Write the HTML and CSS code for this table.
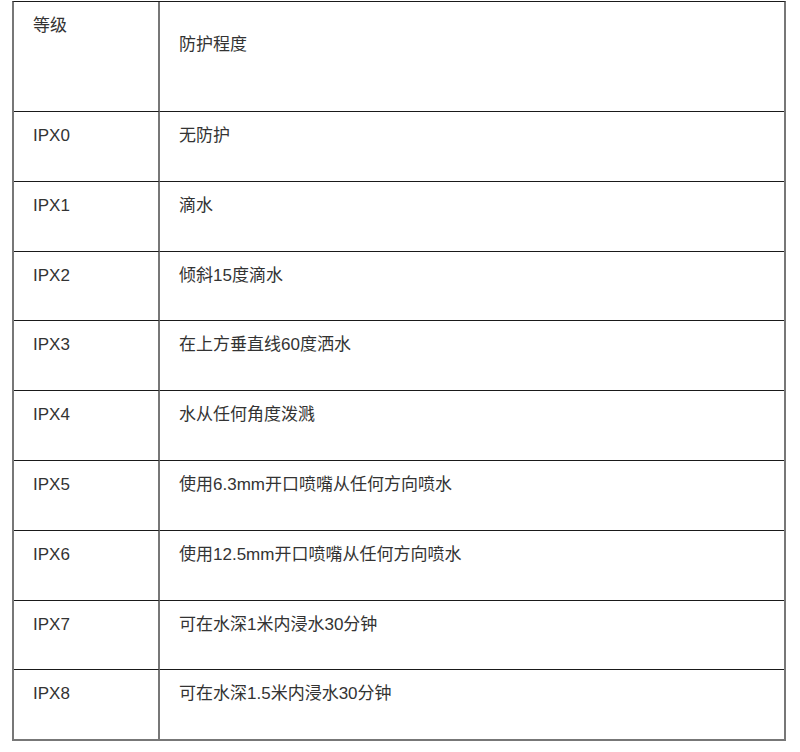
FILE: index.html
```html
<!DOCTYPE html>
<html lang="zh">
<head>
<meta charset="utf-8">
<title>IPX 防水等级</title>
<link rel="stylesheet" href="styles.css">
</head>
<body>
<table class="grade-table">
  <tbody>
    <tr class="head-row">
      <td class="col-grade">等级</td>
      <td class="col-desc"><p class="head-desc">防护程度</p></td>
    </tr>
    <tr><td class="col-grade">IPX0</td><td class="col-desc">无防护</td></tr>
    <tr><td class="col-grade">IPX1</td><td class="col-desc">滴水</td></tr>
    <tr><td class="col-grade">IPX2</td><td class="col-desc">倾斜15度滴水</td></tr>
    <tr><td class="col-grade">IPX3</td><td class="col-desc">在上方垂直线60度洒水</td></tr>
    <tr><td class="col-grade">IPX4</td><td class="col-desc">水从任何角度泼溅</td></tr>
    <tr><td class="col-grade">IPX5</td><td class="col-desc">使用6.3mm开口喷嘴从任何方向喷水</td></tr>
    <tr><td class="col-grade">IPX6</td><td class="col-desc">使用12.5mm开口喷嘴从任何方向喷水</td></tr>
    <tr><td class="col-grade">IPX7</td><td class="col-desc">可在水深1米内浸水30分钟</td></tr>
    <tr><td class="col-grade">IPX8</td><td class="col-desc">可在水深1.5米内浸水30分钟</td></tr>
  </tbody>
</table>
</body>
</html>
```
FILE: styles.css
```css
html, body {
  margin: 0;
  padding: 0;
  background: #ffffff;
}

body {
  padding: 1px 0 0 12px;
  font-family: "Liberation Sans", "Noto Sans CJK SC", sans-serif;
  font-size: 17px;
  color: #333333;
}

.grade-table {
  width: 774px;
  border-collapse: separate;
  border-spacing: 0;
  border-top: 1px solid #1a1a1a;
  border-left: 2px solid #777777;
  border-right: 2px solid #777777;
  border-bottom: 2px solid #777777;
  table-layout: fixed;
}

.grade-table td {
  box-sizing: border-box;
  height: 69.8px;
  vertical-align: top;
  padding: 12px 19px 0 19px;
  line-height: 24px;
  border-bottom: 1px solid #1a1a1a;
}

.grade-table tr:last-child td {
  border-bottom: none;
  height: 68.8px;
}

.grade-table .head-row td {
  height: 110px;
}

.col-grade {
  width: 146px;
  border-right: 2px solid #777777;
}

.head-desc {
  margin: 19px 0 0 0;
}
```
